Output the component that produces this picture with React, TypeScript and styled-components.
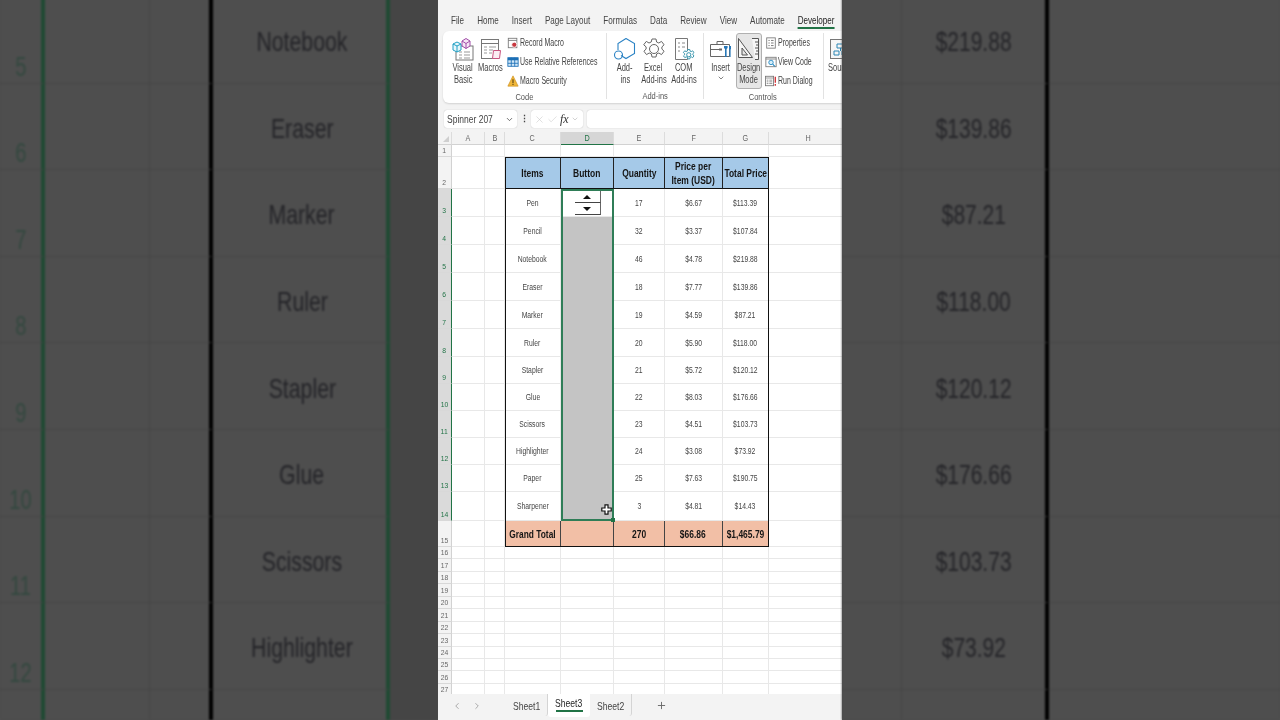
import React from "react";
import styled, { createGlobalStyle, css } from "styled-components";
import { ChevronDown, ChevronLeft, ChevronRight, Plus, X, Check } from "lucide-react";

const GlobalStyle = createGlobalStyle`
  html, body {
    margin: 0;
    padding: 0;
    width: 1280px;
    height: 720px;
    overflow: hidden;
    background: #4d4d4d;
    font-family: "Liberation Sans", Arial, sans-serif;
  }
  * { box-sizing: border-box; }
`;

// the sheet font is a narrow one and no narrow family is installed, so squeeze Liberation Sans
const Squeeze = styled.span<{ $x: number; $left?: boolean }>`
  display: inline-block;
  flex: none;
  white-space: nowrap;
  transform: scaleX(${(p) => p.$x});
  transform-origin: ${(p) => (p.$left ? "left center" : "center")};
`;

const Page = styled.div`
  display: grid;
  grid-template-columns: 438px 404px 438px;
  width: 1280px;
  height: 720px;
  overflow: hidden;
`;

/* ---------- blurred, dimmed sides ---------- */

const SideSheet = styled.div<{ $cols: string }>`
  display: grid;
  grid-template-columns: ${(p) => p.$cols};
  grid-auto-rows: 86.6px;
  margin-top: -3px;
  height: 723px;
  overflow: hidden;
  background: #4e4e4e;
  filter: blur(0.9px);
`;

const SideCell = styled.div<{ $right?: string; $bg?: string }>`
  display: flex;
  align-items: center;
  justify-content: center;
  padding-top: 5px;
  border-bottom: 1px solid #454545;
  border-right: ${(p) => p.$right || "none"};
  background: ${(p) => p.$bg || "transparent"};
  font-size: 28px;
  line-height: 1;
  color: #242428;
`;

const ItemName = styled(SideCell)`
  padding-left: 5px;
`;

const SideRowNum = styled.div`
  display: flex;
  align-items: flex-end;
  justify-content: center;
  padding-bottom: 2px;
  border-bottom: 1px solid #454545;
  border-right: 4px solid #1f4a33;
  font-size: 28px;
  line-height: 1;
  color: #33483f;
`;

/* ---------- excel window ---------- */

const Excel = styled.div`
  display: flex;
  flex-direction: column;
  height: 720px;
  overflow: hidden;
  background: #f3f3f3;
  color: #333;
  filter: blur(0.35px);
`;

const TabBar = styled.div`
  flex: none;
  display: flex;
  gap: 16.9px;
  width: 520px;
  height: 31px;
  padding: 14px 0 0 17px;
  font-size: 10.5px;
  white-space: nowrap;
  transform: scaleX(0.77);
  transform-origin: left center;
`;

const RibbonTab = styled.div<{ $active?: boolean }>`
  height: 15px;
  line-height: 12px;
  color: ${(p) => (p.$active ? "#1c1c1c" : "#444")};
  border-bottom: ${(p) => (p.$active ? "2px solid #217346" : "none")};
`;

const Ribbon = styled.div`
  display: flex;
  flex: none;
  height: 72px;
  margin-left: 5px;
  padding-top: 2px;
  background: #fff;
  border-radius: 6px 0 0 6px;
  box-shadow: 0 1px 2px rgba(0, 0, 0, 0.14);
  overflow: hidden;
`;

const Group = styled.div<{ $w: number; $last?: boolean }>`
  flex: none;
  display: flex;
  flex-direction: column;
  width: ${(p) => p.$w}px;
  height: 66px;
  border-right: ${(p) => (p.$last ? "none" : "1px solid #e2e2e2")};
`;

const GroupItems = styled.div<{ $pad: number }>`
  display: flex;
  height: 57px;
  padding-left: ${(p) => p.$pad}px;
`;

const GroupLabel = styled.div`
  display: flex;
  justify-content: center;
  padding-top: 1px;
  font-size: 9.5px;
  line-height: 12px;
  color: #555;
`;

const LargeButton = styled.div<{ $w: number; $on?: boolean }>`
  flex: none;
  display: flex;
  flex-direction: column;
  align-items: center;
  width: ${(p) => p.$w}px;
  height: 56px;
  padding-top: 3px;
  font-size: 10px;
  line-height: 12px;
  text-align: center;
  color: #444;
  white-space: nowrap;
  background: ${(p) => (p.$on ? "#e6e6e6" : "transparent")};
  border: ${(p) => (p.$on ? "1px solid #b0b0b0" : "1px solid transparent")};
  border-radius: 3px;

  svg.big {
    flex: none;
    width: 24px;
    height: 24px;
    margin-bottom: 1px;
  }
`;

const SmallColumn = styled.div<{ $ml: number }>`
  display: flex;
  flex-direction: column;
  margin-left: ${(p) => p.$ml}px;
`;

const SmallButton = styled.div`
  display: flex;
  align-items: center;
  gap: 1px;
  height: 19px;
  font-size: 10px;
  color: #444;
  white-space: nowrap;

  svg {
    flex: none;
    width: 12px;
    height: 12px;
  }
`;

const FormulaBar = styled.div`
  display: flex;
  align-items: center;
  flex: none;
  height: 18px;
  margin: 7px 0 4px 6px;
  font-size: 10px;
  color: #444;
`;

const NameBox = styled.div`
  display: flex;
  align-items: center;
  justify-content: space-between;
  width: 73px;
  height: 18px;
  padding: 0 3px;
  background: #fff;
  border-radius: 3px;
  box-shadow: 0 0 1px rgba(0, 0, 0, 0.3);
`;

const Dots = styled.div`
  width: 14px;
  text-align: center;
  font-weight: 700;
  font-size: 9px;
`;

const FnBox = styled(NameBox)`
  width: 52px;
  color: #bdbdbd;
  gap: 2px;
  justify-content: flex-start;
`;

const FxLabel = styled.span`
  font-family: "Liberation Serif", "Times New Roman", serif;
  font-style: italic;
  font-size: 12px;
  color: #333;
`;

const FormulaInput = styled.div`
  flex: 1;
  height: 18px;
  margin-left: 4px;
  background: #fff;
  border-radius: 3px 0 0 3px;
  box-shadow: 0 0 1px rgba(0, 0, 0, 0.3);
`;

/* ---------- the sheet grid ---------- */

const sheetTracks = css`
  display: grid;
  grid-area: 1 / 1;
  height: 562px;
  grid-template-columns: 14px 33px 20px 56px 53px 51px 57.5px 46.5px 80px;
  grid-template-rows:
    13px 12px 32px 28px 28px 28px 28px 28px 28px 27px 27px 27px 27px 27px 28.5px 26.5px
    repeat(12, 12.45px);
`;

const Sheet = styled.div`
  flex: none;
  display: grid;
  height: 562px;
  overflow: hidden;
  background: #fff;
`;

const CellLayer = styled.div`
  ${sheetTracks}
`;

const OverLayer = styled.div`
  ${sheetTracks}
  pointer-events: none;
`;

const ColHead = styled.div<{ $on?: boolean }>`
  display: flex;
  align-items: center;
  justify-content: center;
  font-size: 8.5px;
  color: ${(p) => (p.$on ? "#217346" : "#666")};
  background: ${(p) => (p.$on ? "#d6d6d6" : "#f3f3f3")};
  border-right: 1px solid #dcdcdc;
  border-bottom: ${(p) => (p.$on ? "1.5px solid #217346" : "1px solid #d2d2d2")};
`;

const Corner = styled(ColHead)`
  position: relative;
  &::after {
    content: "";
    position: absolute;
    right: 2px;
    bottom: 2px;
    border: 3px solid transparent;
    border-right-color: #cfcfcf;
    border-bottom-color: #cfcfcf;
  }
`;

const RowHead = styled.div<{ $on?: boolean }>`
  display: flex;
  align-items: flex-end;
  justify-content: center;
  font-size: 8px;
  line-height: 9px;
  padding-bottom: 1px;
  overflow: hidden;
  color: ${(p) => (p.$on ? "#217346" : "#666")};
  background: ${(p) => (p.$on ? "#dadada" : "#f3f3f3")};
  border-right: ${(p) => (p.$on ? "1.5px solid #217346" : "1px solid #d2d2d2")};
  border-bottom: 1px solid #d8d8d8;
`;

const Cell = styled.div`
  display: flex;
  align-items: center;
  justify-content: center;
  font-size: 8.5px;
  color: #444;
  border-right: 1px solid #e8e8e8;
  border-bottom: 1px solid #e8e8e8;
`;

const Shaded = styled(Cell)`
  background: #c4c4c4;
  border: none;
`;

const HeaderCell = styled(Cell)`
  padding-top: 1px;
  text-align: center;
  font-size: 11px;
  line-height: 14px;
  font-weight: 700;
  color: #151515;
  background: #a5c9e8;
  border-right: 1px solid #222;
  border-bottom: 1px solid #111;
`;

const TotalCell = styled(HeaderCell)`
  font-size: 11px;
  background: #f2bfa6;
  border-right-color: #444;
  border-bottom: none;
`;

const TableFrame = styled.div`
  grid-row: 3 / 17;
  grid-column: 4 / 9;
  border: 1.5px solid #111;
`;

const Selection = styled.div`
  position: relative;
  grid-row: 4 / 16;
  grid-column: 5;
  border: 2px solid #2f7d57;

  &::after {
    content: "";
    position: absolute;
    right: -3px;
    bottom: -3px;
    width: 4px;
    height: 4px;
    background: #217346;
  }
`;

const CursorIcon = styled.svg`
  position: absolute;
  right: 0;
  bottom: 4px;
  width: 11px;
  height: 11px;
`;

const Spinner = styled.div`
  grid-row: 4;
  grid-column: 5;
  display: flex;
  flex-direction: column;
  align-self: center;
  justify-self: center;
  width: 26px;
  height: 24px;
`;

const SpinButton = styled.div<{ $down?: boolean }>`
  flex: 1;
  display: flex;
  align-items: center;
  justify-content: center;
  background: #fff;
  border-right: 1px solid #666;
  border-bottom: 1px solid #444;

  &::before {
    content: "";
    border-left: 4px solid transparent;
    border-right: 4px solid transparent;
    border-top: ${(p) => (p.$down ? "4px solid #111" : "none")};
    border-bottom: ${(p) => (p.$down ? "none" : "4px solid #111")};
  }
`;

/* ---------- sheet tabs ---------- */

const SheetBar = styled.div`
  flex: none;
  display: flex;
  align-items: flex-start;
  height: 26px;
  padding-left: 14px;
  font-size: 10.5px;
  color: #444;
  background: #f3f3f3;
`;

const NavArrows = styled.div`
  display: flex;
  align-items: center;
  gap: 10px;
  width: 54px;
  height: 22px;
  padding-top: 1px;
  color: #9a9a9a;
`;

const SheetTab = styled.div<{ $active?: boolean }>`
  display: flex;
  flex-direction: column;
  align-items: center;
  width: 42px;
  height: ${(p) => (p.$active ? "23px" : "22px")};
  padding-top: ${(p) => (p.$active ? "3px" : "6px")};
  line-height: 13px;
  color: ${(p) => (p.$active ? "#1f1f1f" : "#444")};
  background: ${(p) => (p.$active ? "#fff" : "transparent")};
  border-right: ${(p) => (p.$active ? "none" : "1px solid #d4d4d4")};
  border-radius: 0 0 3px 3px;

  &::after {
    content: "";
    display: ${(p) => (p.$active ? "block" : "none")};
    width: 27px;
    height: 2px;
    background: #217346;
  }
`;

const AddSheet = styled.div`
  display: flex;
  align-items: center;
  height: 22px;
  margin-left: 24px;
  color: #666;
`;

/* ---------- ribbon icons ---------- */

const VisualBasicIcon = () => (
  <svg className="big" viewBox="0 0 24 24" fill="none">
    <rect x="5" y="9" width="17" height="14" fill="#fff" stroke="#777" />
    <path d="M8 15h3M13 15h6M8 18h3M13 18h6M8 21h3M13 21h6" stroke="#999" />
    <path d="M2 7l4-2 4 2v6l-4 2-4-2z" fill="#e8f7fb" stroke="#1f9fc4" />
    <path d="M2 7l4 2 4-2M6 9v6" stroke="#1f9fc4" />
    <path d="M11 4l4-2.5 4 2.5v5l-4 2.5-4-2.5z" fill="#f6e6f6" stroke="#a04ca8" />
    <path d="M11 4l4 2.5 4-2.5M15 6.5v5" stroke="#a04ca8" />
  </svg>
);

const MacrosIcon = () => (
  <svg className="big" viewBox="0 0 24 24" fill="none">
    <rect x="2.5" y="2.5" width="17" height="19" fill="#fff" stroke="#777" />
    <path d="M2.5 6.5h17" stroke="#777" />
    <path d="M5 10h3M10 10h7M5 13h3M10 13h4M5 16h3M10 16h3" stroke="#999" />
    <path d="M14.5 13.5h7l-1 8h-7z" fill="#fbeef3" stroke="#c6537f" />
  </svg>
);

const RecordIcon = () => (
  <svg viewBox="0 0 14 14" fill="none">
    <rect x="1.5" y="1.5" width="10" height="11" fill="#fff" stroke="#777" />
    <path d="M1.5 4h10" stroke="#777" />
    <circle cx="8.5" cy="9" r="3" fill="#c8373f" stroke="#fff" />
  </svg>
);

const RelativeIcon = () => (
  <svg viewBox="0 0 14 14" fill="none">
    <rect x="1" y="2" width="12" height="10" fill="#cfe6f7" stroke="#1c6fb5" />
    <rect x="1" y="2" width="12" height="3" fill="#1c6fb5" />
    <path d="M5 2v10M9 2v10M1 8.5h12" stroke="#1c6fb5" />
  </svg>
);

const SecurityIcon = () => (
  <svg viewBox="0 0 14 14" fill="none">
    <path d="M7 1l6 12H1z" fill="#f0b73a" stroke="#c98a15" strokeWidth="0.7" />
    <path d="M7 5v4.5" stroke="#5a4312" strokeWidth="1.3" />
    <path d="M7 10.5v1.3" stroke="#5a4312" strokeWidth="1.3" />
  </svg>
);

const AddInsIcon = () => (
  <svg className="big" viewBox="0 0 24 24" fill="none" stroke="#2a82c4" strokeWidth="1.1">
    <path d="M13 1.5l8.5 5v10l-8.5 5-5-3M5 13V6.5l8-5" />
    <circle cx="5.5" cy="18" r="4" />
  </svg>
);

const GearPath =
  "M10 2h4l.6 3 2.2 1 2.7-1.6 2.6 3.4-2.2 2.1v2.2l2.2 2.1-2.6 3.4-2.7-1.6-2.2 1-.6 3h-4l-.6-3-2.2-1-2.7 1.6-2.6-3.4 2.2-2.1v-2.2L1.7 7.8l2.6-3.4L7 6l2.2-1z";

const ExcelGearIcon = () => (
  <svg className="big" viewBox="0 0 24 24" fill="none" stroke="#666" strokeWidth="1">
    <path d={GearPath} />
    <circle cx="12" cy="12" r="4.5" />
  </svg>
);

const ComIcon = () => (
  <svg className="big" viewBox="0 0 24 24" fill="none">
    <path d="M3.5 1.5h12v21h-12z" fill="#fff" stroke="#777" />
    <path d="M6 6h2M10 6h3M6 10h2M10 10h3M6 14h2" stroke="#888" />
    <g transform="translate(10.5 11.5) scale(0.52)" stroke="#2c8ea8" strokeWidth="1.8" fill="#fff">
      <path d={GearPath} />
      <circle cx="12" cy="12" r="4" />
    </g>
  </svg>
);

const InsertIcon = () => (
  <svg className="big" viewBox="0 0 24 24" fill="none">
    <path d="M1.5 7.5h19v12h-19zM8 7.5V4.5h6v3M1.5 12.5h9" stroke="#666" />
    <path d="M15 9v2l1 1v8h1.6v-8l1-1V9" fill="#2878b8" />
    <path d="M20 9h2v3l-.4.6V20h-1.2v-7.4L20 12z" fill="#2878b8" />
    <rect x="10" y="11.5" width="3" height="2" fill="#666" />
  </svg>
);

const DesignIcon = () => (
  <svg className="big" viewBox="0 0 24 24" fill="none">
    <path d="M1.5 1.5l14 19h-14z" fill="#f7f7f7" stroke="#555" />
    <path d="M5 11l5.5 7H5z" fill="#e6e6e6" stroke="#555" />
    <path d="M15 1.5h6.5v21H18" fill="#f7f7f7" stroke="#555" />
    <path d="M18 5h3.5M19 8h2.5M18 11h3.5M19 14h2.5M18 17h3.5" stroke="#555" />
  </svg>
);

const PropertiesIcon = () => (
  <svg viewBox="0 0 14 14" fill="none">
    <rect x="2" y="1" width="10" height="12" fill="#fff" stroke="#777" />
    <path d="M4 4h1.5M7 4h3M4 7h1.5M7 7h3M4 10h1.5M7 10h3" stroke="#666" />
  </svg>
);

const ViewCodeIcon = () => (
  <svg viewBox="0 0 14 14" fill="none">
    <rect x="1" y="1.5" width="12" height="11" fill="#fff" stroke="#777" />
    <path d="M1 3.5h12" stroke="#777" />
    <circle cx="7" cy="7.5" r="2.6" fill="#d6eefa" stroke="#1f86c2" />
    <path d="M9 9.5l2.5 2.5" stroke="#1f86c2" strokeWidth="1.2" />
  </svg>
);

const RunDialogIcon = () => (
  <svg viewBox="0 0 14 14" fill="none">
    <rect x="0.5" y="1.5" width="9.5" height="11" fill="#fff" stroke="#777" />
    <path d="M0.5 3.5h9.5M2 6h2M5 6h3.5M2 8h2M5 8h3.5M2 10h2M5 10h3.5" stroke="#888" />
    <path d="M12 2v7M12 10.5v2" stroke="#d0282e" strokeWidth="1.5" />
  </svg>
);

const SourceIcon = () => (
  <svg className="big" viewBox="0 0 24 24" fill="none">
    <rect x="2.5" y="2.5" width="19" height="19" fill="#f6f6f6" stroke="#777" />
    <path d="M9 7h7v4H9zM6 14h5v4H6zM14 14h5v4h-5zM12.5 11v3" stroke="#2a86b5" />
  </svg>
);

/* ---------- data ---------- */

const ribbonTabs = ["File", "Home", "Insert", "Page Layout", "Formulas", "Data", "Review", "View", "Automate"];
const colNames = ["A", "B", "C", "D", "E", "F", "G", "H"];

const rows: [string, string, string, string][] = [
  ["Pen", "17", "$6.67", "$113.39"],
  ["Pencil", "32", "$3.37", "$107.84"],
  ["Notebook", "46", "$4.78", "$219.88"],
  ["Eraser", "18", "$7.77", "$139.86"],
  ["Marker", "19", "$4.59", "$87.21"],
  ["Ruler", "20", "$5.90", "$118.00"],
  ["Stapler", "21", "$5.72", "$120.12"],
  ["Glue", "22", "$8.03", "$176.66"],
  ["Scissors", "23", "$4.51", "$103.73"],
  ["Highlighter", "24", "$3.08", "$73.92"],
  ["Paper", "25", "$7.63", "$190.75"],
  ["Sharpener", "3", "$4.81", "$14.43"],
];

const sideRows = rows.slice(2, 10);

const LeftSide = () => (
  <SideSheet $cols="45px 105px 63px 177px 1fr">
    {sideRows.map((r, i) => (
      <React.Fragment key={r[0]}>
        <SideRowNum>
          <Squeeze $x={0.72}>{i + 5}</Squeeze>
        </SideRowNum>
        <SideCell $right="1px solid #454545" />
        <SideCell $right="4px solid #000" />
        <ItemName $right="4px solid #1f4a33">
          <Squeeze $x={0.76}>{r[0]}</Squeeze>
        </ItemName>
        <SideCell $bg="#454545" />
      </React.Fragment>
    ))}
    <SideRowNum />
    <SideCell $right="1px solid #454545" />
    <SideCell $right="4px solid #000" />
    <ItemName $right="4px solid #1f4a33" />
    <SideCell $bg="#454545" />
  </SideSheet>
);

const RightSide = () => (
  <SideSheet $cols="60px 147px 1fr">
    {sideRows.map((r) => (
      <React.Fragment key={r[0]}>
        <SideCell $right="1px solid #454545" />
        <SideCell $right="4px solid #000">
          <Squeeze $x={0.75}>{r[3]}</Squeeze>
        </SideCell>
        <SideCell />
      </React.Fragment>
    ))}
    <SideCell $right="1px solid #454545" />
    <SideCell $right="4px solid #000" />
    <SideCell />
  </SideSheet>
);

const Btn = ({ lines }: { lines: string[] }) => (
  <>
    {lines.map((l) => (
      <Squeeze key={l} $x={0.75}>
        {l}
      </Squeeze>
    ))}
  </>
);

const Small = ({ children }: { children: string }) => (
  <Squeeze $x={0.7} $left>
    {children}
  </Squeeze>
);

const GroupName = ({ children }: { children: string }) => (
  <GroupLabel>
    <Squeeze $x={0.79}>{children}</Squeeze>
  </GroupLabel>
);

const RibbonBar = () => (
  <Ribbon>
    <Group $w={164}>
      <GroupItems $pad={7}>
        <LargeButton $w={26}>
          <VisualBasicIcon />
          <Btn lines={["Visual", "Basic"]} />
        </LargeButton>
        <LargeButton $w={29}>
          <MacrosIcon />
          <Btn lines={["Macros"]} />
        </LargeButton>
        <SmallColumn $ml={2}>
          <SmallButton>
            <RecordIcon />
            <Small>Record Macro</Small>
          </SmallButton>
          <SmallButton>
            <RelativeIcon />
            <Small>Use Relative References</Small>
          </SmallButton>
          <SmallButton>
            <SecurityIcon />
            <Small>Macro Security</Small>
          </SmallButton>
        </SmallColumn>
      </GroupItems>
      <GroupName>Code</GroupName>
    </Group>
    <Group $w={96.5}>
      <GroupItems $pad={5}>
        <LargeButton $w={26}>
          <AddInsIcon />
          <Btn lines={["Add-", "ins"]} />
        </LargeButton>
        <LargeButton $w={31}>
          <ExcelGearIcon />
          <Btn lines={["Excel", "Add-ins"]} />
        </LargeButton>
        <LargeButton $w={29}>
          <ComIcon />
          <Btn lines={["COM", "Add-ins"]} />
        </LargeButton>
      </GroupItems>
      <GroupName>Add-ins</GroupName>
    </Group>
    <Group $w={120}>
      <GroupItems $pad={3}>
        <LargeButton $w={29}>
          <InsertIcon />
          <Btn lines={["Insert"]} />
          <ChevronDown size={8} strokeWidth={2} />
        </LargeButton>
        <LargeButton $w={26} $on>
          <DesignIcon />
          <Btn lines={["Design", "Mode"]} />
        </LargeButton>
        <SmallColumn $ml={3}>
          <SmallButton>
            <PropertiesIcon />
            <Small>Properties</Small>
          </SmallButton>
          <SmallButton>
            <ViewCodeIcon />
            <Small>View Code</Small>
          </SmallButton>
          <SmallButton>
            <RunDialogIcon />
            <Small>Run Dialog</Small>
          </SmallButton>
        </SmallColumn>
      </GroupItems>
      <GroupName>Controls</GroupName>
    </Group>
    <Group $w={60} $last>
      <GroupItems $pad={3}>
        <LargeButton $w={26}>
          <SourceIcon />
          <Btn lines={["Source"]} />
        </LargeButton>
      </GroupItems>
    </Group>
  </Ribbon>
);

const Num = ({ children }: { children: React.ReactNode }) => <Squeeze $x={0.85}>{children}</Squeeze>;
const Data = ({ children }: { children: string }) => <Squeeze $x={0.8}>{children}</Squeeze>;
const Bold = ({ children }: { children: string }) => <Squeeze $x={0.77}>{children}</Squeeze>;

const SheetGrid = () => (
  <Sheet>
    <CellLayer>
      <Corner />
      {colNames.map((c) => (
        <ColHead key={c} $on={c === "D"}>
          <Num>{c}</Num>
        </ColHead>
      ))}

      <RowHead>
        <Num>1</Num>
      </RowHead>
      {colNames.map((c) => (
        <Cell key={c} />
      ))}

      <RowHead>
        <Num>2</Num>
      </RowHead>
      <Cell />
      <Cell />
      <HeaderCell>
        <Bold>Items</Bold>
      </HeaderCell>
      <HeaderCell>
        <Bold>Button</Bold>
      </HeaderCell>
      <HeaderCell>
        <Bold>Quantity</Bold>
      </HeaderCell>
      <HeaderCell>
        <Squeeze $x={0.77}>
          Price per
          <br />
          Item (USD)
        </Squeeze>
      </HeaderCell>
      <HeaderCell>
        <Bold>Total Price</Bold>
      </HeaderCell>
      <Cell />

      {rows.map((r, i) => (
        <React.Fragment key={r[0]}>
          <RowHead $on>
            <Num>{i + 3}</Num>
          </RowHead>
          <Cell />
          <Cell />
          <Cell>
            <Data>{r[0]}</Data>
          </Cell>
          {i === 0 ? <Cell /> : <Shaded />}
          <Cell>
            <Data>{r[1]}</Data>
          </Cell>
          <Cell>
            <Data>{r[2]}</Data>
          </Cell>
          <Cell>
            <Data>{r[3]}</Data>
          </Cell>
          <Cell />
        </React.Fragment>
      ))}

      <RowHead>
        <Num>15</Num>
      </RowHead>
      <Cell />
      <Cell />
      <TotalCell>
        <Squeeze $x={0.76}>Grand Total</Squeeze>
      </TotalCell>
      <TotalCell />
      <TotalCell>
        <Bold>270</Bold>
      </TotalCell>
      <TotalCell>
        <Bold>$66.86</Bold>
      </TotalCell>
      <TotalCell>
        <Bold>$1,465.79</Bold>
      </TotalCell>
      <Cell />

      {Array.from({ length: 12 }, (_, i) => (
        <React.Fragment key={i}>
          <RowHead>
            <Num>{i + 16}</Num>
          </RowHead>
          {colNames.map((c) => (
            <Cell key={c} />
          ))}
        </React.Fragment>
      ))}
    </CellLayer>

    <OverLayer>
      <TableFrame />
      <Spinner>
        <SpinButton />
        <SpinButton $down />
      </Spinner>
      <Selection>
        <CursorIcon viewBox="0 0 11 11">
          <path
            d="M4 .8h3V4h3.2v3H7v3.2H4V7H.8V4H4z"
            fill="#fff"
            stroke="#111"
            strokeWidth="1.2"
          />
        </CursorIcon>
      </Selection>
    </OverLayer>
  </Sheet>
);

export default function App() {
  return (
    <Page>
      <GlobalStyle />
      <LeftSide />
      <Excel>
        <TabBar>
          {ribbonTabs.map((t) => (
            <RibbonTab key={t}>{t}</RibbonTab>
          ))}
          <RibbonTab $active>Developer</RibbonTab>
        </TabBar>
        <RibbonBar />
        <FormulaBar>
          <NameBox>
            <Squeeze $x={0.85} $left>
              Spinner 207
            </Squeeze>
            <ChevronDown size={9} />
          </NameBox>
          <Dots>⋮</Dots>
          <FnBox>
            <X size={11} strokeWidth={1} />
            <Check size={11} strokeWidth={1} />
            <FxLabel>fx</FxLabel>
            <ChevronDown size={8} />
          </FnBox>
          <FormulaInput />
        </FormulaBar>
        <SheetGrid />
        <SheetBar>
          <NavArrows>
            <ChevronLeft size={10} />
            <ChevronRight size={10} />
          </NavArrows>
          <SheetTab>
            <Squeeze $x={0.82}>Sheet1</Squeeze>
          </SheetTab>
          <SheetTab $active>
            <Squeeze $x={0.82}>Sheet3</Squeeze>
          </SheetTab>
          <SheetTab>
            <Squeeze $x={0.82}>Sheet2</Squeeze>
          </SheetTab>
          <AddSheet>
            <Plus size={11} />
          </AddSheet>
        </SheetBar>
      </Excel>
      <RightSide />
    </Page>
  );
}
